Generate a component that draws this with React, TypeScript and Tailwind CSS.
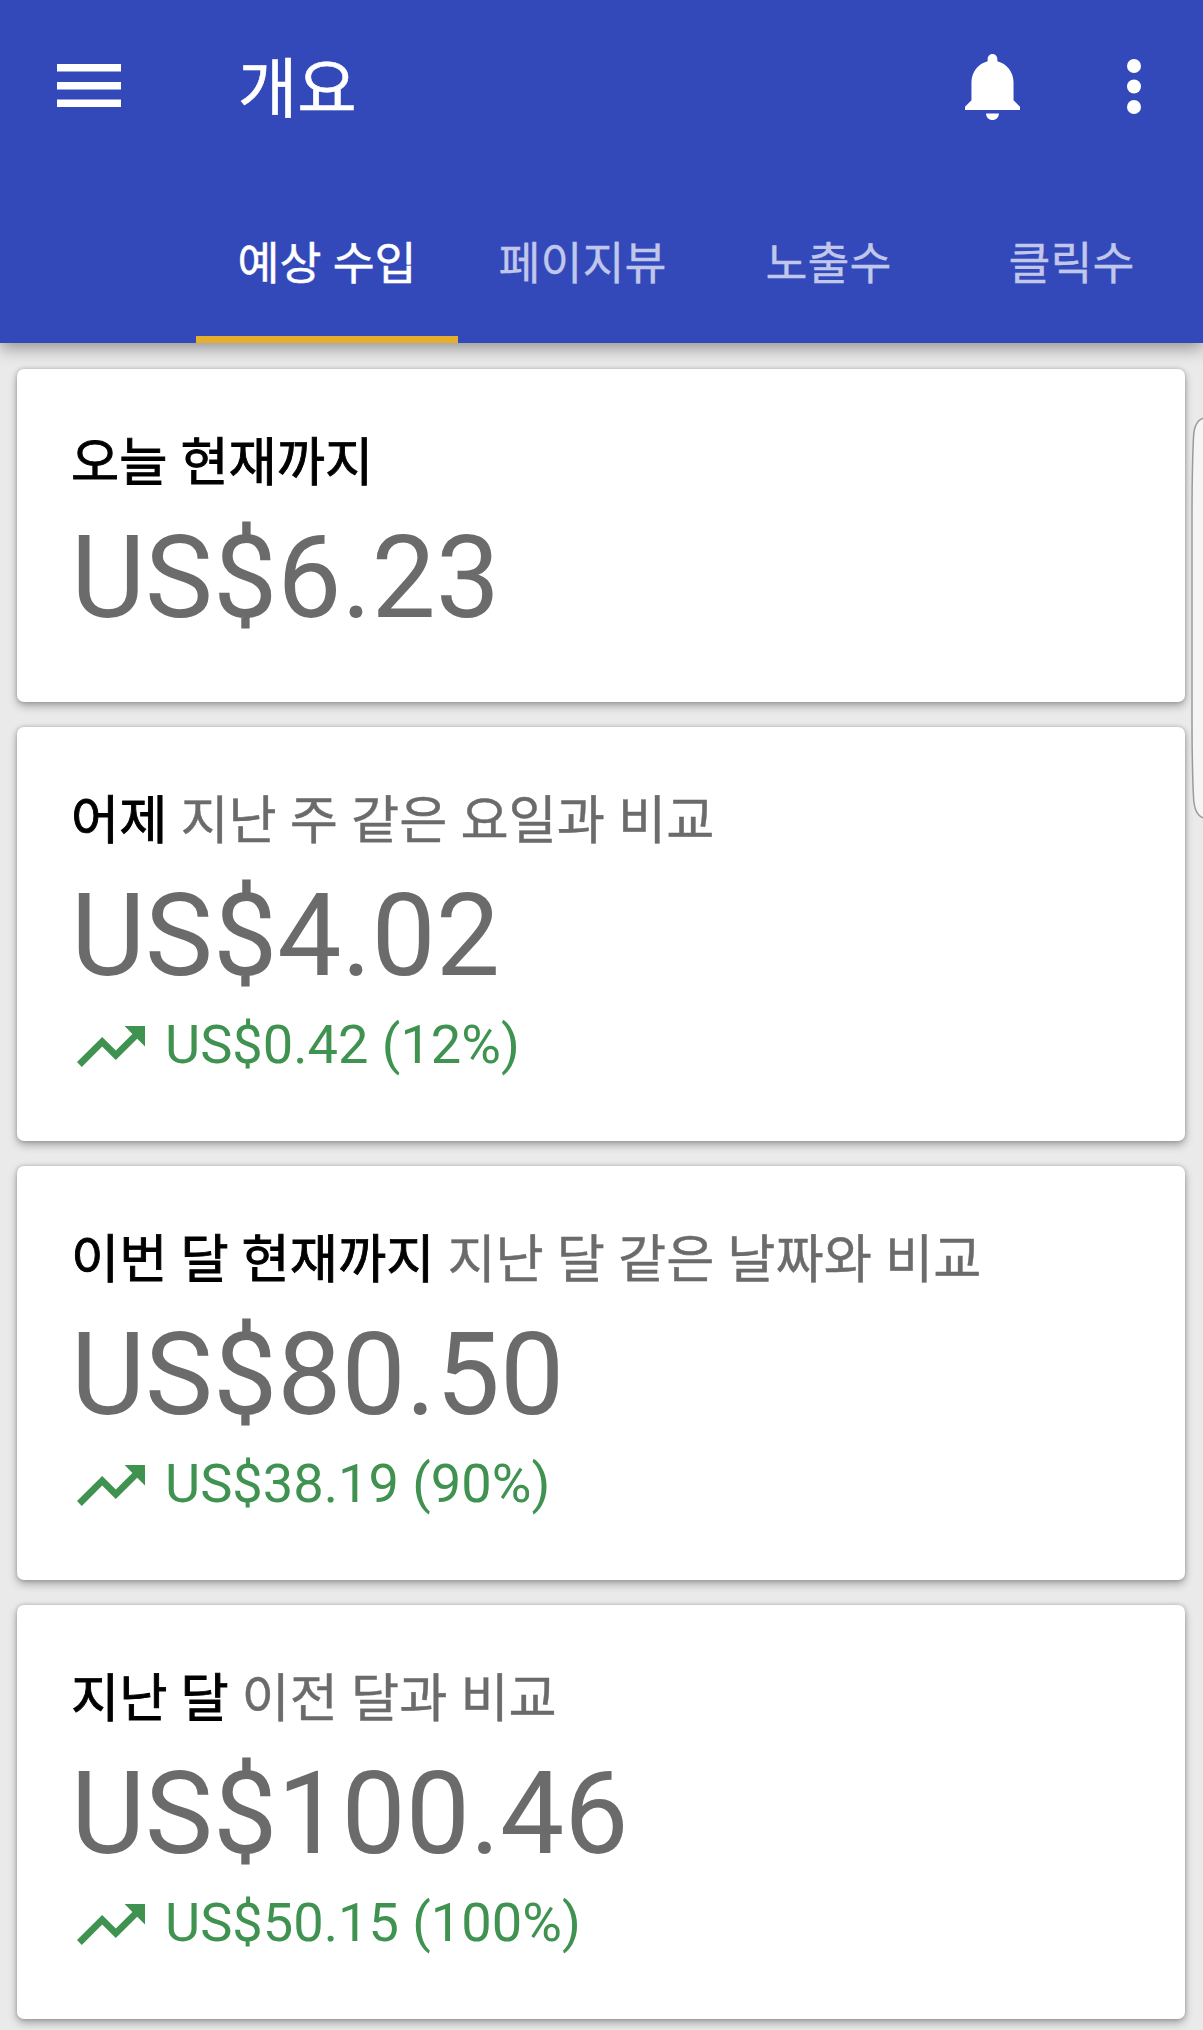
import { useState } from "react";
import clsx from "clsx";

type Stat = {
  id: string;
  title: string;
  compare?: string;
  amount: string;
  change?: string;
};

const tabs = [
  { name: "예상 수입", width: "w-[262px]" },
  { name: "페이지뷰", width: "w-[249px]" },
  { name: "노출수", width: "w-[243px]" },
  { name: "클릭수", width: "w-[243px]" },
];

const stats: Stat[] = [
  { id: "today", title: "오늘 현재까지", amount: "US$6.23" },
  {
    id: "yesterday",
    title: "어제",
    compare: "지난 주 같은 요일과 비교",
    amount: "US$4.02",
    change: "US$0.42 (12%)",
  },
  {
    id: "month",
    title: "이번 달 현재까지",
    compare: "지난 달 같은 날짜와 비교",
    amount: "US$80.50",
    change: "US$38.19 (90%)",
  },
  {
    id: "last-month",
    title: "지난 달",
    compare: "이전 달과 비교",
    amount: "US$100.46",
    change: "US$50.15 (100%)",
  },
];

function MenuIcon() {
  return (
    <svg viewBox="0 0 64 43" className="w-16 h-[43px]" fill="currentColor">
      <path d="M0 0h64v7.500H0zM0 18h64v7.500H0zM0 35.500h64v7.500H0z" />
    </svg>
  );
}

function BellIcon() {
  return (
    <svg viewBox="3 2 17 20" className="w-[55px] h-[66px]" preserveAspectRatio="none" fill="currentColor">
      <path d="M11.500 22c1.100 0 2-.9 2-2h-4c0 1.100.9 2 2 2zm6.500-6v-5.500c0-3.070-2.130-5.640-5-6.320V3.500c0-.83-.67-1.500-1.500-1.500S10 2.670 10 3.500v.68c-2.870.68-5 3.250-5 6.320V16l-2 2v1h17v-1l-2-2z" />
    </svg>
  );
}

function MoreIcon() {
  return (
    <svg viewBox="0 0 14 55" className="w-3.5 h-[55px]" fill="currentColor">
      <circle cx="7" cy="7" r="7" />
      <circle cx="7" cy="27.500" r="7" />
      <circle cx="7" cy="48" r="7" />
    </svg>
  );
}

function TrendingUpIcon() {
  return (
    <svg viewBox="2 6 20 12" className="w-[68px] h-[41px] mt-0.5" fill="currentColor">
      <path d="M16 6l2.290 2.290-4.880 4.880-4-4L2 16.590 3.410 18l6-6 4 4 6.300-6.290L22 12V6z" />
    </svg>
  );
}

function StatCard({ stat }: { stat: Stat }) {
  return (
    <section
      className={clsx(
        "rounded-[7px] bg-white pl-[55px] pt-[59px] shadow-[0_4px_8px_rgba(0,0,0,0.3),0_0_4px_rgba(0,0,0,0.2)]",
        stat.change ? "h-[414px]" : "h-[333px]"
      )}
    >
      <h2 className="h-[83px] -ml-px text-[52.4px] leading-[71px] text-[#6b6b6b] whitespace-nowrap [-webkit-text-stroke:0.4px]">
        <span className="text-black [-webkit-text-stroke:0.9px]">{stat.title}</span>
        {stat.compare && " " + stat.compare}
      </h2>
      <p className="h-[136px] text-[114.3px] leading-[134px] text-[#6b6b6b] -ml-px">
        {stat.amount}
      </p>
      {stat.change && (
        <div className="flex items-center h-20 pl-[5px] gap-5 text-[#3f9250]">
          <TrendingUpIcon />
          <span className="text-[54.2px] leading-[64px]">{stat.change}</span>
        </div>
      )}
    </section>
  );
}

export default function App() {
  const [active, setActive] = useState(0);

  return (
    <div className="relative w-[1203px] h-[2030px] overflow-hidden bg-[#eaeaea] font-[Roboto,'Noto_Sans_CJK_KR',sans-serif]">
      <header className="relative h-[343px] flex flex-col justify-between bg-[#3349ba] text-white shadow-[0_5px_16px_rgba(0,0,0,0.38)]">
        <div className="flex items-center h-[172px] pl-[57px] pr-[62px]">
          <button className="pb-px" aria-label="메뉴">
            <MenuIcon />
          </button>
          <h1 className="ml-[117px] pt-[7px] flex-1 text-[64.5px] leading-[80px] [-webkit-text-stroke:0.6px]">
            개요
          </h1>
          <button className="pt-0.5" aria-label="알림">
            <BellIcon />
          </button>
          <button className="ml-[107px]" aria-label="더보기">
            <MoreIcon />
          </button>
        </div>
        <nav className="flex h-[158px] pl-[196px]">
          {tabs.map((tab, i) => (
            <button
              key={tab.name}
              onClick={() => setActive(i)}
              className={clsx(
                "shrink-0 pt-[9px] border-b-7 text-[45.6px] leading-[60px] whitespace-nowrap",
                tab.width,
                i === active
                  ? "border-[#e5ae2d] text-white [-webkit-text-stroke:0.5px]"
                  : "border-transparent text-[#c0c7ea] [-webkit-text-stroke:0.3px]"
              )}
            >
              {tab.name}
            </button>
          ))}
        </nav>
      </header>

      <main className="flex flex-col gap-[25px] pt-[26px] pl-[17px] pr-[18px]">
        {stats.map((s) => (
          <StatCard key={s.id} stat={s} />
        ))}
      </main>

      {/* edge panel handle */}
      <svg
        viewBox="0 0 12 402"
        className="absolute right-0 top-[417px] w-3 h-[402px]"
      >
        <path
          d="M14 .7C6 2 3 9 2.500 20C1.300 45 1 70 1 100V300C1 330 1.300 355 2.500 380C3 392 6 400 14 401.300"
          fill="#f5f5f5"
          stroke="#9a9a9a"
          strokeWidth="1.500"
        />
      </svg>
    </div>
  );
}
